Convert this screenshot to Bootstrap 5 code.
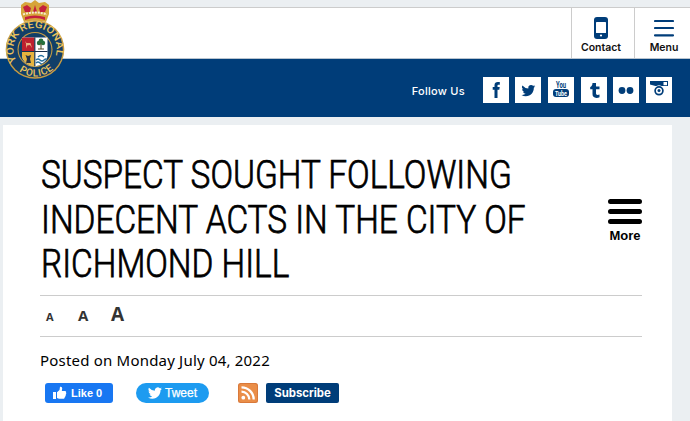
<!DOCTYPE html>
<html lang="en">
<head>
    <meta charset="UTF-8">
    <meta name="viewport" content="width=device-width, initial-scale=1.0">
    <title>York Regional Police</title>
    <link rel="stylesheet" href="https://cdn.jsdelivr.net/npm/bootstrap@5.3.0/dist/css/bootstrap.min.css">
    <style>
        body {
            background-color: #ebeff2;
            color: #000;
            font-family: "Liberation Sans", Arial, sans-serif;
            height: 421px;
            overflow: hidden;
        }
        svg {
            display: block;
        }
        .site-header {
            height: 52px;
            margin-top: 7px;
            border-top: 1px solid #ccc;
            border-bottom: 1px solid #b9c4cf;
        }
        .crest {
            top: 0;
            left: 4px;
        }
        .header-link {
            border-left: 1px solid #ccc;
            font: 600 10.5px/13px Inter, sans-serif;
            color: #111;
            padding-top: 8px;
        }
        .header-contact {
            width: 63px;
            padding-right: 4px;
        }
        .header-menu {
            width: 56px;
            padding-left: 3px;
        }
        .header-link svg {
            margin-bottom: 2px;
        }
        .follow-bar {
            height: 58px;
            background: #003d79;
            padding: 18px 18px 0 0;
            gap: 6.7px;
        }
        .follow-text {
            font: 500 11px/28px Inter, sans-serif;
            letter-spacing: .25px;
            margin-right: 11px;
        }
        .social {
            width: 26px;
            height: 26px;
        }
        .page-box {
            margin: 8px 18px 0 3px;
            height: 296px;
            padding: 27px 30px 0 37px;
        }
        .page-title {
            font: 300 38px/44.5px Roboto, sans-serif;
            height: 143px;
            padding: 1px 0 0 1px;
            margin: 0;
            white-space: nowrap;
            -webkit-text-stroke: .75px #000;
        }
        .page-title span {
            display: block;
            transform: scaleX(.878);
            transform-origin: 0 0;
            width: max-content;
        }
        .more-link {
            font: bold 13px/16px "Liberation Sans", sans-serif;
            padding-top: 47px;
            width: 34px;
        }
        .more-link span {
            margin-top: 3px;
        }
        .text-sizes {
            height: 42px;
            border-top: 1px solid #ccc;
            border-bottom: 1px solid #ccc;
            font-family: "Open Sans", sans-serif;
            font-weight: bold;
            color: #333;
            line-height: 1;
            padding: 9px 0 0 6px;
        }
        .size-s { font-size: 11px; width: 32px; }
        .size-m { font-size: 15px; width: 33px; }
        .size-l { font-size: 19px; }
        .posted {
            font: 15px/20px "Noto Sans", sans-serif;
            letter-spacing: .2px;
            margin: 13px 0;
        }
        .share-row {
            padding-left: 5px;
            font: bold 11px/20px "Liberation Sans", sans-serif;
            color: #fff;
        }
        .share-row > * {
            height: 20px;
        }
        .like-btn {
            width: 68px;
            background: #1877f2;
            border-radius: 3px;
            margin-right: 23px;
            padding-left: 7px;
        }
        .tweet-btn {
            width: 73px;
            background: #1d9bf0;
            font-size: 12px;
            font-weight: normal;
            margin-right: 29px;
            padding-left: 12px;
            -webkit-text-stroke: .25px #fff;
        }
        .tweet-btn svg {
            margin-right: 3px;
        }
        .subscribe-btn {
            width: 73px;
            background: #003d79;
            border-radius: 2px;
            margin-left: 8px;
            font: bold 11.4px/20px Inter, sans-serif;
        }
    </style>
</head>
<body>

    <header class="site-header bg-white d-flex justify-content-end">
        <a class="header-link header-contact d-flex flex-column align-items-center text-decoration-none" href="#">
            <svg width="14" height="23" viewBox="0 0 14 23">
                <rect y="1" width="14" height="22" rx="3" fill="#003d79"/>
                <rect x="2" y="6" width="10" height="11" rx=".6" fill="#fff"/>
                <circle cx="7" cy="19.5" r="1.1" fill="#fff"/>
            </svg>
            <span>Contact</span>
        </a>
        <a class="header-link header-menu d-flex flex-column align-items-center text-decoration-none" href="#">
            <svg width="20" height="23" viewBox="0 0 20 23">
                <path d="M1 5h18M1 12h18M1 19.3h18" stroke="#003d79" stroke-width="2.2" stroke-linecap="round"/>
            </svg>
            <span>Menu</span>
        </a>
    </header>

    <!-- crest hangs over the header and the blue bar -->
    <a class="crest position-absolute" href="#">
        <svg width="62" height="80" viewBox="4 0 62 80">
            <path d="M24 22l-3-8 0-9 4-3 6 1 4-3 4 3 6-1 4 3 0 9-3 8q-11-3-22 0z" fill="#d6a43a"/>
            <path d="M25 12l-2-5 4-2 4 3-1 4zM45 12l2-5-4-2-4 3 1 4zM33 12l2-7 2 7zM25 20q10-4 20 0l0-3q-10-3-20 0z" fill="#c4213c"/>
            <path d="M23 14.500q12-4 24 0" stroke="#f7ecd0" stroke-width="2" stroke-dasharray="2 1" fill="none"/>
            <circle cx="35" cy="49.500" r="29.300" fill="#c59b43"/>
            <circle cx="35" cy="49.500" r="27.800" fill="#123f68"/>
            <circle cx="35" cy="49.500" r="17.500" fill="#c59b43"/>
            <circle cx="35" cy="49.500" r="16.400" fill="#123f68"/>
            <clipPath id="shield"><path d="M22 37.500h25.500v18q0 8-12.700 11-12.800-3-12.800-11z"/></clipPath>
            <g clip-path="url(#shield)">
                <path d="M22 36h26v32h-26z" fill="#fff"/>
                <path d="M22 36h12.500v15.500h-12.500z" fill="#bd202f"/>
                <path d="M22 52h12.500v16h-12.500z" fill="#e7b33e"/>
                <path d="M25 41l1.500 2h4l1.500 5-2-3-3 .5-1 3v-5z" fill="#e9b284"/>
                <path d="M25.500 55l2.500 1 3-1-1 4 1 4h-5l1-4z" fill="#263346"/>
                <circle cx="39" cy="43" r="2.200" fill="#28723e"/>
                <circle cx="43" cy="43" r="2.200" fill="#28723e"/>
                <circle cx="41" cy="41" r="2.400" fill="#28723e"/>
                <path d="M41 43v6M38 49h6" stroke="#55512e" stroke-width="1.100"/>
                <path d="M36 60q2-2 4 0t4 0 4 0M36 63q2-2 4 0t4 0 4 0M38 57q3-3 6 0" stroke="#2670a0" stroke-width="1.300" fill="none"/>
                <path d="M34.800 35v33M21 51.500h28" stroke="#17304d" stroke-width="1.200"/>
            </g>
            <path id="ring-top" d="M16.800 61A21.600 21.600 0 1 1 53.200 61" fill="none"/>
            <path id="ring-bottom" d="M15 67.500A26.900 26.900 0 0 0 55 67.500" fill="none"/>
            <g fill="#ecc45d" font-family="Roboto, sans-serif" font-weight="500">
                <text font-size="10"><textPath href="#ring-top" textLength="86" lengthAdjust="spacingAndGlyphs">YORK REGIONAL</textPath></text>
                <text font-size="10"><textPath href="#ring-bottom" startOffset="5.500" textLength="37">POLICE</textPath></text>
            </g>
        </svg>
    </a>

    <div class="follow-bar d-flex justify-content-end text-white">
        <span class="follow-text">Follow Us</span>
        <a class="social bg-white" href="#">
            <svg width="26" height="26" fill="#003d79"><path d="M11.5 21v-8.2H9.7V10h1.8V8.3C11.5 6 12.8 5 14.8 5h2v2.8h-1.3c-.8 0-1 .3-1 1V10h2.2l-.4 2.8h-1.8V21z"/></svg>
        </a>
        <a class="social bg-white" href="#">
            <svg width="26" height="26" viewBox="0 0 26 26" fill="#003d79"><path transform="translate(6.5 8) scale(.86)" d="M5 13c6 0 9.300-5 9.300-9.300v-.4A6.600 6.600 0 0 0 16 1.500a6.500 6.500 0 0 1-1.900.5A3.300 3.300 0 0 0 15.500.2a6.500 6.500 0 0 1-2 .8 3.300 3.300 0 0 0-5.600 3A9.300 9.300 0 0 1 1.100.6a3.300 3.300 0 0 0 1 4.400A3.300 3.300 0 0 1 .6 4.600a3.300 3.300 0 0 0 2.600 3.200 3.200 3.200 0 0 1-1.500.1 3.300 3.300 0 0 0 3.100 2.300A6.600 6.600 0 0 1 0 11.500 9.300 9.300 0 0 0 5 13"/></svg>
        </a>
        <a class="social bg-white" href="#">
            <svg width="26" height="26" font-family="Roboto, sans-serif" font-weight="bold" font-size="8.500">
                <rect x="5" y="12" width="16" height="8" rx="3" fill="#003d79"/>
                <text x="8" y="11" textLength="10" lengthAdjust="spacingAndGlyphs" fill="#003d79">You</text>
                <text x="7" y="18.800" font-size="8" textLength="12" lengthAdjust="spacingAndGlyphs" fill="#fff">Tube</text>
            </svg>
        </a>
        <a class="social bg-white" href="#">
            <svg width="26" height="26" fill="#003d79"><path d="M11.500 6H15v3.600h3.500v2.700H15v4c0 1.300.6 1.700 1.600 1.700.7 0 1.400-.2 1.900-.5v2.700c-.8.5-1.800.7-3 .7-2.700 0-4-1.300-4-3.800v-4.800H9.200v-2.400c1.500-.4 2.200-1.900 2.300-3.900z"/></svg>
        </a>
        <a class="social bg-white" href="#">
            <svg width="26" height="26" fill="#003d79"><circle cx="9" cy="13.500" r="3.400"/><circle cx="17" cy="13.500" r="3.400"/></svg>
        </a>
        <a class="social bg-white" href="#">
            <svg width="26" height="26" fill="#003d79">
                <path d="M4 4h18v5H9.500L4 7.500z"/>
                <rect x="17.500" y="5" width="3.500" height="3.200" fill="#fff"/>
                <circle cx="13" cy="13.800" r="5.500" fill="#fff"/>
                <circle cx="13" cy="13.800" r="3.900" fill="none" stroke="#003d79" stroke-width="1.700"/>
                <circle cx="13" cy="13.600" r="1.500"/>
            </svg>
        </a>
    </div>

    <main class="page-box bg-white">
        <div class="d-flex justify-content-between">
            <h1 class="page-title">
                <span>SUSPECT SOUGHT FOLLOWING</span>
                <span>INDECENT ACTS IN THE CITY OF</span>
                <span>RICHMOND HILL</span>
            </h1>
            <div class="more-link d-flex flex-column align-items-center">
                <svg width="34" height="26">
                    <path d="M2.500 2.500h29M2.500 12.500h29M2.500 22.500h29" stroke="#000" stroke-width="5" stroke-linecap="round"/>
                </svg>
                <span>More</span>
            </div>
        </div>
        <div class="text-sizes d-flex align-items-baseline">
            <span class="size-s">A</span>
            <span class="size-m">A</span>
            <span class="size-l">A</span>
        </div>
        <p class="posted">Posted on Monday July 04, 2022</p>
        <div class="share-row d-flex">
            <a class="like-btn d-flex align-items-center text-white text-decoration-none" href="#">
                <svg class="me-1" width="15" height="14" fill="#fff"><path d="M1 6h3v7H1zM5 6.200L7.500 4 8 .8c1.500-.3 2.300.6 2.200 2L9.800 5H13c1 0 1.400.8 1 1.600.5.7.3 1.400-.2 1.800.2.700 0 1.200-.5 1.600.1.700-.1 1.200-.7 1.500 0 .9-.5 1.300-1.400 1.300H7L5 12z"/></svg>
                <span>Like 0</span>
            </a>
            <a class="tweet-btn rounded-pill d-flex align-items-center text-white text-decoration-none" href="#">
                <svg width="14" height="12" viewBox="0 0 16 13" fill="#fff"><path d="M5 13c6 0 9.300-5 9.300-9.300v-.4A6.600 6.600 0 0 0 16 1.500a6.500 6.500 0 0 1-1.900.5A3.300 3.300 0 0 0 15.500.2a6.500 6.500 0 0 1-2 .8 3.300 3.300 0 0 0-5.600 3A9.300 9.300 0 0 1 1.100.6a3.300 3.300 0 0 0 1 4.400A3.300 3.300 0 0 1 .6 4.600a3.300 3.300 0 0 0 2.600 3.200 3.200 3.200 0 0 1-1.500.1 3.300 3.300 0 0 0 3.100 2.300A6.600 6.600 0 0 1 0 11.500 9.300 9.300 0 0 0 5 13"/></svg>
                <span>Tweet</span>
            </a>
            <svg width="20" height="20" fill="none">
                <rect width="20" height="20" rx="2.500" fill="#d9793a"/>
                <rect x="1" y="1" width="18" height="18" rx="2" fill="#ea8e48"/>
                <circle cx="5.300" cy="14.700" r="1.900" fill="#fff"/>
                <path d="M3.500 8.700a7.800 7.800 0 0 1 7.800 7.800M3.500 4.300a12.200 12.200 0 0 1 12.200 12.200" stroke="#fff" stroke-width="2.300"/>
            </svg>
            <a class="subscribe-btn text-center text-white text-decoration-none" href="#">Subscribe</a>
        </div>
    </main>

    <script src="https://cdn.jsdelivr.net/npm/bootstrap@5.3.0/dist/js/bootstrap.bundle.min.js"></script>
</body>
</html>
